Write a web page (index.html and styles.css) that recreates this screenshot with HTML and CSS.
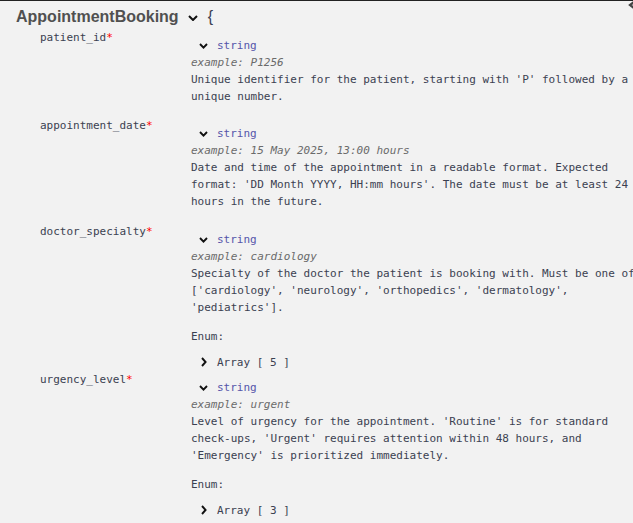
FILE: index.html
```html
<!DOCTYPE html>
<html>
<head>
<meta charset="utf-8">
<link rel="stylesheet" href="styles.css">
</head>
<body>
<div class="frame">
  <svg class="corner-mark" width="6" height="8" viewBox="0 0 6 8"><path d="M6 1 L2 4 L6 7" fill="none" stroke="#444" stroke-width="2.2"/></svg>
  <div class="model-box">
    <div class="title-line">
      <span class="model-title">AppointmentBooking</span>
      <svg class="title-toggle" width="10" height="6" viewBox="0 0 10 6"><polyline points="1,1 5,5 9,1" fill="none" stroke="#111" stroke-width="2"/></svg>
      <span class="brace-open">{</span>
    </div>
    <div class="props">
      <div class="row">
        <div class="name">patient_id<span class="star">*</span></div>
        <div class="val">
          <div class="toggle-line"><svg class="chev-down" width="9" height="6" viewBox="0 0 9 6"><polyline points="1,1 4.5,4.6 8,1" fill="none" stroke="#111" stroke-width="1.9"/></svg><span class="type">string</span></div>
          <div class="example">example: P1256</div>
          <div class="desc">Unique identifier for the patient, starting with 'P' followed by a unique number.</div>
        </div>
      </div>
      <div class="row">
        <div class="name">appointment_date<span class="star">*</span></div>
        <div class="val">
          <div class="toggle-line"><svg class="chev-down" width="9" height="6" viewBox="0 0 9 6"><polyline points="1,1 4.5,4.6 8,1" fill="none" stroke="#111" stroke-width="1.9"/></svg><span class="type">string</span></div>
          <div class="example">example: 15 May 2025, 13:00 hours</div>
          <div class="desc">Date and time of the appointment in a readable format. Expected format: 'DD Month YYYY, HH:mm hours'. The date must be at least 24 hours in the future.</div>
        </div>
      </div>
      <div class="row">
        <div class="name">doctor_specialty<span class="star">*</span></div>
        <div class="val">
          <div class="toggle-line"><svg class="chev-down" width="9" height="6" viewBox="0 0 9 6"><polyline points="1,1 4.5,4.6 8,1" fill="none" stroke="#111" stroke-width="1.9"/></svg><span class="type">string</span></div>
          <div class="example">example: cardiology</div>
          <div class="desc">Specialty of the doctor the patient is booking with. Must be one of ['cardiology', 'neurology', 'orthopedics', 'dermatology', 'pediatrics'].</div>
          <div class="enum-label">Enum:</div>
          <div class="enum-toggle"><svg class="chev-right" width="6" height="10" viewBox="0 0 6 10"><polyline points="1,1 4.6,5 1,9" fill="none" stroke="#111" stroke-width="1.9"/></svg><span>Array [ 5 ]</span></div>
        </div>
      </div>
      <div class="row">
        <div class="name">urgency_level<span class="star">*</span></div>
        <div class="val">
          <div class="toggle-line"><svg class="chev-down" width="9" height="6" viewBox="0 0 9 6"><polyline points="1,1 4.5,4.6 8,1" fill="none" stroke="#111" stroke-width="1.9"/></svg><span class="type">string</span></div>
          <div class="example">example: urgent</div>
          <div class="desc">Level of urgency for the appointment. 'Routine' is for standard check-ups, 'Urgent' requires attention within 48 hours, and 'Emergency' is prioritized immediately.</div>
          <div class="enum-label">Enum:</div>
          <div class="enum-toggle"><svg class="chev-right" width="6" height="10" viewBox="0 0 6 10"><polyline points="1,1 4.6,5 1,9" fill="none" stroke="#111" stroke-width="1.9"/></svg><span>Array [ 3 ]</span></div>
        </div>
      </div>
    </div>
    <div class="brace-close">}</div>
  </div>
</div>
</body>
</html>
```

FILE: styles.css
```css
html, body {
  margin: 0;
  padding: 0;
  background: #f2f2f2;
  overflow: hidden;
}

.frame {
  position: relative;
  border-top: 1px solid #222;
  height: 522px;
  overflow: hidden;
}

.corner-mark {
  position: absolute;
  top: 0;
  right: -1px;
}

.model-box {
  padding: 7px 0 0 16px;
}

.title-line {
  display: flex;
  align-items: center;
  height: 18px;
}

.model-title {
  font: bold 16px/18px "Liberation Sans", Arial, sans-serif;
  color: #505050;
}

.title-toggle {
  margin-left: 9px;
  margin-top: 2px;
}

.brace-open {
  margin-left: 10px;
  font: 16px/18px "Liberation Sans", Arial, sans-serif;
  color: #3b4151;
}

.props {
  margin-top: 2.5px;
  padding-left: 24px;
  font: 11px/17px "DejaVu Sans Mono", monospace;
  color: #3b4151;
}

.row {
  display: flex;
}

.name {
  width: 151px;
  flex: none;
}

.star {
  color: #f00;
}

.val {
  width: 448px;
  flex: none;
  padding-top: 8px;
}

.toggle-line {
  display: flex;
  align-items: center;
  padding-left: 8px;
  gap: 9px;
}

.chev-down {
  margin-top: 1px;
}

.type {
  color: #55a;
}

.example {
  color: #6b6b6b;
  font-style: italic;
}

.desc {
  margin-bottom: 12.5px;
}

.enum-toggle {
  display: flex;
  align-items: center;
  margin-top: 8.5px;
  padding-left: 10px;
  gap: 10px;
}

.brace-close {
  font: 11px/17px "DejaVu Sans Mono", monospace;
  color: #3b4151;
  padding-left: 1px;
}
```
